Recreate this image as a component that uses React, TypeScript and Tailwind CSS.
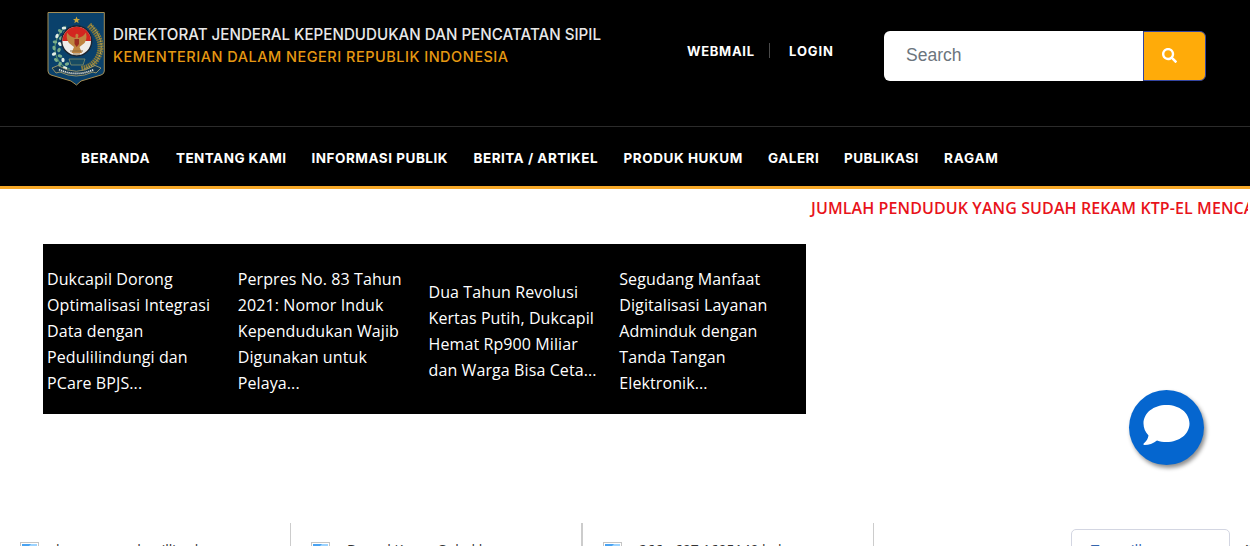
import React from "react";
import { FaSearch } from "react-icons/fa";

const nav = [
  { label: "BERANDA", cls: "w-[95px] tracking-[0.5px]" },
  { label: "TENTANG KAMI", cls: "w-[135.5px] tracking-[0.45px]" },
  { label: "INFORMASI PUBLIK", cls: "w-[162px] tracking-[0.52px]" },
  { label: "BERITA / ARTIKEL", cls: "w-[150px] tracking-[0.5px]" },
  { label: "PRODUK HUKUM", cls: "w-[144.5px] tracking-[0.55px]" },
  { label: "GALERI", cls: "w-[76px] tracking-[0.5px]" },
  { label: "PUBLIKASI", cls: "w-[100px] tracking-[0.4px]" },
  { label: "RAGAM", cls: "w-[60px] tracking-[0.8px]" },
];

const news = [
  ["Dukcapil Dorong", "Optimalisasi Integrasi", "Data dengan", "Pedulilindungi dan", "PCare BPJS..."],
  ["Perpres No. 83 Tahun", "2021: Nomor Induk", "Kependudukan Wajib", "Digunakan untuk", "Pelaya..."],
  ["Dua Tahun Revolusi", "Kertas Putih, Dukcapil", "Hemat Rp900 Miliar", "dan Warga Bisa Ceta..."],
  ["Segudang Manfaat", "Digitalisasi Layanan", "Adminduk dengan", "Tanda Tangan", "Elektronik..."],
];

const leaves = [
  [17, 17], [13, 20], [18, 22], [10, 25], [14, 27], [8, 31], [13, 33], [7, 37],
  [12, 39], [7, 43], [13, 45], [9, 49], [16, 49], [13, 53], [20, 53], [18, 57],
];

function Crest() {
  return (
    <svg width="58" height="75" viewBox="0 0 58 75">
      <path d="M1 1.500H57.300V60Q57.300 63 54 64L34 70L29.500 74L24 70L4 64Q1 63 1 60Z" fill="#0a416b" stroke="#a58e55" strokeWidth="1" />
      <path d="M29.500 5.500L30.500 7.900L33 8.100L31 9.700L31.700 12.200L29.500 10.800L27.300 12.200L28 9.700L26 8.100L28.500 7.900Z" fill="#c9a63c" />
      <path d="M19 15Q3 31 10 47Q14 56 23 58" fill="none" stroke="#4f8c69" strokeWidth="1.2" />
      {leaves.map(([x, y], i) => (
        <ellipse key={i} cx={x} cy={y} rx="2.3" ry="1.6" fill={i % 3 ? "#79ad8b" : "#e2ede5"} transform={`rotate(${i * 37} ${x} ${y})`} />
      ))}
      <path d="M42 14Q60 31 50 48Q45 56 34 58" fill="none" stroke="#85793a" strokeWidth="6" strokeDasharray="1.7 0.7" />
      <path d="M44 14Q60 31 51 48Q46 55 37 58" fill="none" stroke="#c1aa55" strokeWidth="1" strokeDasharray="2 1" />
      <circle cx="29.700" cy="30" r="15" fill="#f0ece9" stroke="#1b2430" strokeWidth="1.4" />
      <path d="M15.400 30A14.300 14.300 0 0 1 44 30Z" fill="#d32620" />
      <path d="M28.500 24Q29.500 21.500 31.500 24L31 27Q36 26 39 21.500Q41 31 35 34L32.500 36L35 42H24.500L27 36L24.500 34Q18.500 31 20 21.500Q23 26 28.500 27Z" fill="#bf8440" />
      <path d="M27.500 28H32V33L29.700 36L27.500 33Z" fill="#9d2d20" />
      <path d="M23 40H36M26 43H33" stroke="#8c6d40" strokeWidth="1.2" />
      <path d="M22 48H38L36 54H24Z" fill="#174b63" stroke="#84906c" strokeWidth=".8" />
      <path d="M5 57L11 54.500Q29 66 48 54.500L54 57L49 62L46 61Q29 69 13 61L9 62Z" fill="#123751" stroke="#b4a76d" strokeWidth=".8" />
      <path d="M12 58.500Q29 66.500 47 58.500" fill="none" stroke="#d8dad4" strokeWidth="1.8" strokeDasharray="1.3 .7" />
    </svg>
  );
}

function BrokenImage() {
  return (
    <svg width="19" height="16" viewBox="0 0 19 16" className="shrink-0">
      <rect x=".5" y=".5" width="18" height="15" fill="#fff" stroke="#c4c4c4" />
      <rect x="2" y="2" width="15" height="10" fill="#9bd3ff" />
      <path d="M2 2H11L8 5H2Z" fill="#4aa3f2" />
    </svg>
  );
}

export default function App() {
  return (
    <div className="flex h-[546px] w-full flex-col overflow-hidden bg-white font-['Open_Sans',sans-serif]">
      <header className="h-[189px] shrink-0 border-b-[3px] border-[#f7a827] bg-black text-white">
        <div className="flex h-[127px] items-start border-b border-[#2b2b2b]">
          <div className="ml-[47px] mt-[11px] flex w-[640px]">
            <Crest />
            <svg width="500" height="75" className="ml-2 font-['Inter',sans-serif]">
              <text x="0" y="28.500" fontSize="16.300" fontWeight="500" fill="#e8e8e8" textLength="488" lengthAdjust="spacingAndGlyphs">
                DIREKTORAT JENDERAL KEPENDUDUKAN DAN PENCATATAN SIPIL
              </text>
              <text x="0" y="51.300" fontSize="14.500" fontWeight="500" fill="#e59812" textLength="395">
                KEMENTERIAN DALAM NEGERI REPUBLIK INDONESIA
              </text>
            </svg>
          </div>
          <div className="mt-[42px] flex h-5 w-[197px] items-center font-['Inter',sans-serif] text-[13px] font-bold">
            <span className="w-[82px] whitespace-nowrap tracking-[0.7px]">WEBMAIL</span>
            <span className="-mt-1 h-[15px] w-px bg-[#4a4a4a]" />
            <span className="ml-[19px] whitespace-nowrap tracking-[0.9px]">LOGIN</span>
          </div>
          <div className="mt-[31px] flex h-[50px] w-[322px]">
            <div className="flex w-[259px] items-center rounded-l-md bg-white pb-[2px] pl-[22px] font-['Liberation_Sans',sans-serif] text-[17.5px] text-[#6c757d]">
              Search
            </div>
            <button className="flex w-[63px] items-center rounded-r-md border border-[#3445a0] bg-[#ffab09] pb-[1px] pl-[18px]">
              <FaSearch size={15} />
            </button>
          </div>
        </div>
        <nav className="flex h-[59px] items-center pl-[81px] pt-[3px] font-['Inter',sans-serif] text-[13.5px] font-bold">
          {nav.map((n) => (
            <a key={n.label} className={`shrink-0 whitespace-nowrap ${n.cls}`}>{n.label}</a>
          ))}
        </nav>
      </header>

      <div className="ml-[809px] mr-[2px] h-[55px] shrink-0 overflow-hidden whitespace-nowrap pl-[2px] pt-[7px] text-[16px] font-semibold leading-6 tracking-[0.1px] text-[#e8131a]">
        JUMLAH PENDUDUK YANG SUDAH REKAM KTP-EL MENCAPAI
      </div>

      <div className="flex h-[279px] shrink-0 pl-[43px]">
        <section className="grid h-[170px] w-[763px] grid-cols-4 items-center bg-black text-[16px] leading-[26px] tracking-[0.1px] text-white">
          {news.map((lines) => (
            <div key={lines[0]} className="whitespace-nowrap pl-1 pt-1">
              {lines.map((l) => <div key={l}>{l}</div>)}
            </div>
          ))}
        </section>
        <button className="ml-[323px] mt-[146px] h-[75px] w-[75px] rounded-full bg-[#0566cf] shadow-[2px_3px_4px_rgba(0,0,0,0.45)]">
          <svg width="75" height="75" viewBox="0 0 75 75">
            <path d="M37.500 15C50.500 15 60.500 23 60.500 33.500S50.500 52 37.500 52C34 52 31 51.500 28 50.400C24 53.500 20 55 15.500 55C14 55 14.200 53.800 15 53.200C17.500 51 19 48.500 19.500 45.500C16.300 42.200 14.500 38 14.500 33.500C14.500 23 24.500 15 37.500 15Z" fill="#fff" />
          </svg>
        </button>
      </div>

      <div className="flex h-[23px] shrink-0 overflow-hidden text-[14px] leading-5 text-[#333]">
        <div className="flex w-[291px] shrink-0 items-start border-r border-[#ccc] pl-5 pt-[19px]">
          <BrokenImage />
          <span className="-mt-[2px] ml-[17px] whitespace-nowrap">kenaungan damillius k</span>
        </div>
        <div className="flex w-[292px] shrink-0 items-start border-r-2 border-[#ccc] pl-5 pt-[19px]">
          <BrokenImage />
          <span className="-mt-[2px] ml-[17px] whitespace-nowrap">Duned Karan Gubal k</span>
        </div>
        <div className="flex w-[291px] shrink-0 items-start border-r border-[#ccc] pl-5 pt-[19px]">
          <BrokenImage />
          <span className="-mt-[2px] ml-[17px] whitespace-nowrap">266 - 697 1695149 kuk</span>
        </div>
        <div className="ml-[197px] mt-[6px] h-10 w-[159px] shrink-0 rounded-[5px] border border-[#d3d6e2] pl-[19px] pt-[9px] text-[15px] text-[#3465ad]">Tampilkan</div>
        <span className="ml-[15px] mt-[15px] shrink-0 text-[14px] font-bold">×</span>
      </div>
    </div>
  );
}
